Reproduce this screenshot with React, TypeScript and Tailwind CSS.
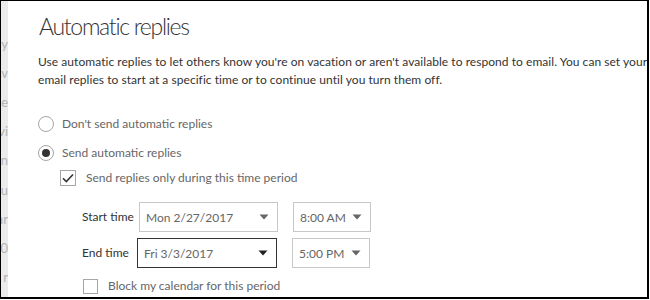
import React from "react";

const Caret = ({ dark }: { dark?: boolean }) => (
  <svg width="10" height="6" viewBox="0 0 10 6" className="shrink-0">
    <path d="M0.5 0.5 L9.5 0.5 L5 5.5 Z" fill={dark ? "#222" : "#666"} />
  </svg>
);

const Select = ({
  value,
  width,
  dark,
}: {
  value: string;
  width: string;
  dark?: boolean;
}) => (
  <div
    className={`flex h-[30px] shrink-0 items-center justify-between border pl-[6px] pr-[8px] ${width} ${
      dark ? "border-[#333]" : "border-[#c8c8c8]"
    }`}
  >
    <span className="pt-[2px] text-[12px] text-[#666]">{value}</span>
    <Caret dark={dark} />
  </div>
);

const Checkbox = ({ checked, size }: { checked?: boolean; size: string }) => (
  <div
    className={`flex shrink-0 items-center justify-center border border-[#a6a6a6] bg-white ${size}`}
  >
    {checked && (
      <svg width="12" height="10" viewBox="0 0 12 10">
        <path d="M1 5.2 L4.3 8.5 L11 1.5" fill="none" stroke="#333" strokeWidth="1.6" />
      </svg>
    )}
  </div>
);

const Radio = ({ checked }: { checked?: boolean }) => (
  <div className="flex h-[16px] w-[16px] shrink-0 items-center justify-center rounded-full border border-[#a6a6a6] bg-white">
    {checked && <div className="h-[8px] w-[8px] rounded-full bg-[#333]" />}
  </div>
);

const sideLetters = ["y", "ev", "e", "vi", "n", "u", "ar", "0", "r"];

export default function App() {
  return (
    <div
      className="h-[300px] w-[650px] overflow-hidden bg-white"
      style={{ fontFamily: 'Lato, "Open Sans", "Liberation Sans", sans-serif' }}
    >
      <div className="flex h-[299px] w-[649px] overflow-hidden border-b-2 border-l border-r-2 border-t border-black">
        <div className="flex w-[7px] shrink-0 flex-col items-end overflow-hidden bg-[#ebebeb] pt-[34px]">
          {sideLetters.map((l, i) => (
            <div
              key={i}
              className="h-[30px] whitespace-nowrap text-[13px] leading-[18px] text-[#b3b3b3]"
            >
              {l}
            </div>
          ))}
        </div>
        <div className="min-w-0 flex-1 pl-[30px] pt-[9px] text-[#333]">
          <h1 className="ml-[1px] text-[23px] font-light leading-[32px] tracking-[-1.3px] text-[#333]">
            Automatic replies
          </h1>
          <p className="mt-[11px] whitespace-nowrap text-[12px] leading-[18px] tracking-[0.05px] text-[#333]">
            Use automatic replies to let others know you're on vacation or aren't available to respond to email. You can set your
            <br />
            email replies to start at a specific time or to continue until you turn them off.
          </p>
          <div className="mt-[26px] flex h-[18px] items-center gap-[8px]">
            <Radio />
            <span className="text-[12px] text-[#666]">Don't send automatic replies</span>
          </div>
          <div className="mt-[11px] flex h-[18px] items-center gap-[8px]">
            <Radio checked />
            <span className="text-[12px] text-[#666]">Send automatic replies</span>
          </div>
          <div className="ml-[22px] mt-[7px] flex h-[18px] items-center gap-[10px]">
            <Checkbox checked size="h-[16px] w-[16px]" />
            <span className="text-[12px] text-[#666]">Send replies only during this time period</span>
          </div>
          <div className="ml-[44px] mt-[15px] flex items-center">
            <span className="w-[57px] shrink-0 whitespace-nowrap text-[12px] text-[#333]">Start time</span>
            <Select value="Mon 2/27/2017" width="w-[139px]" />
            <div className="w-[15px] shrink-0" />
            <Select value="8:00 AM" width="w-[78px]" />
          </div>
          <div className="ml-[44px] mt-[6px] flex items-center">
            <span className="w-[55px] shrink-0 whitespace-nowrap text-[12px] text-[#333]">End time</span>
            <Select value="Fri 3/3/2017" width="w-[140px]" dark />
            <div className="w-[15px] shrink-0" />
            <Select value="5:00 PM" width="w-[78px]" />
          </div>
          <div className="ml-[45px] mt-[10px] flex h-[16px] items-center gap-[10px]">
            <Checkbox size="h-[15px] w-[15px]" />
            <span className="text-[12px] text-[#666]">Block my calendar for this period</span>
          </div>
        </div>
      </div>
    </div>
  );
}
